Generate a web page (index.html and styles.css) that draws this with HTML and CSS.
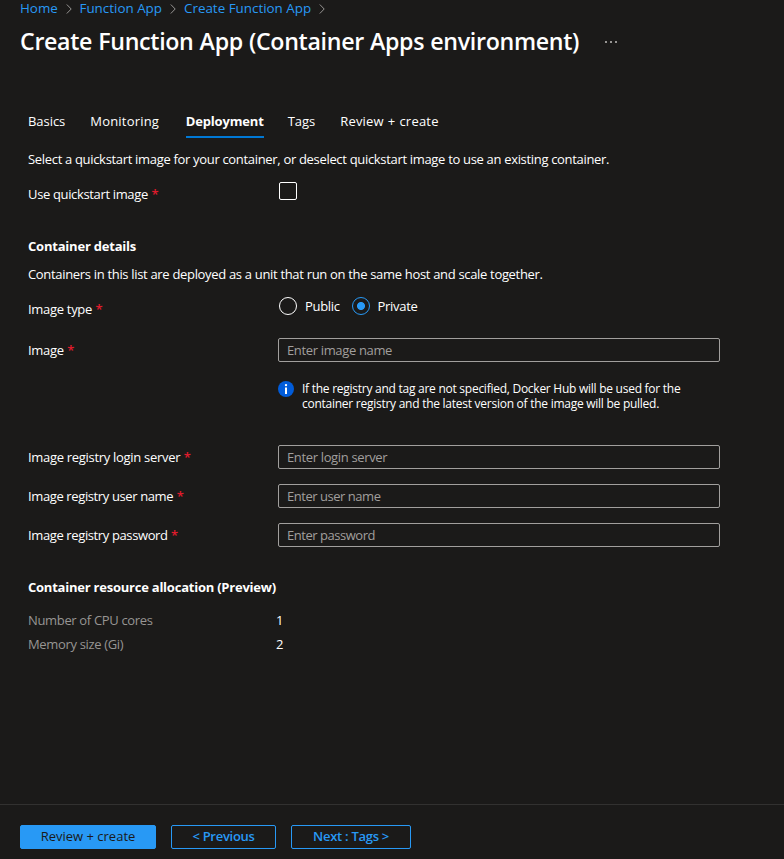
FILE: index.html
```html
<!DOCTYPE html>
<html lang="en">
<head>
<meta charset="utf-8">
<title>Create Function App</title>
<link rel="stylesheet" href="styles.css">
</head>
<body>
<div class="page">
  <nav class="breadcrumb">
    <a class="crumb-home">Home</a><svg class="chev" viewBox="0 0 6 10"><path d="M.8.5 5.2 5 .8 9.5"/></svg>
    <a>Function App</a><svg class="chev" viewBox="0 0 6 10"><path d="M.8.5 5.2 5 .8 9.5"/></svg>
    <a class="crumb-create">Create Function App</a><svg class="chev" viewBox="0 0 6 10"><path d="M.8.5 5.2 5 .8 9.5"/></svg>
  </nav>
  <header class="title-row">
    <h1>Create Function App (Container Apps environment)</h1>
    <svg class="more" viewBox="0 0 12 2"><path d="M0 0h2v2H0zM5 0h2v2H5zM10 0h2v2h-2z"/></svg>
  </header>
  <div class="tabs">
    <a class="tab">Basics</a>
    <a class="tab monitoring">Monitoring</a>
    <a class="tab active">Deployment</a>
    <a class="tab">Tags</a>
    <a class="tab review">Review + create</a>
  </div>
  <main class="content">
    <p class="intro">Select a quickstart image for your container, or deselect quickstart image to use an existing container.</p>
    <div class="row quickstart">
      <label>Use quickstart image <span class="req">*</span></label>
      <span class="checkbox"></span>
    </div>
    <h2>Container details</h2>
    <p class="details">Containers in this list are deployed as a unit that run on the same host and scale together.</p>
    <div class="row type">
      <label>Image type <span class="req">*</span></label>
      <div class="radios">
        <span class="radio"></span><span class="public">Public</span>
        <span class="radio selected"></span><span>Private</span>
      </div>
    </div>
    <div class="row">
      <label>Image <span class="req">*</span></label>
      <input type="text" placeholder="Enter image name">
    </div>
    <div class="info">
      <svg class="info-icon" viewBox="0 0 16 16"><circle cx="8" cy="8" r="8" fill="#015cda"/><circle cx="8" cy="4.1" r="1.2" fill="#fff"/><path d="M7 6.4h2V13H7z" fill="#fff"/></svg>
      <p>If the registry and tag are not specified, Docker Hub will be used for the<br>container registry and the latest version of the image will be pulled.</p>
    </div>
    <div class="registry">
      <div class="row">
        <label>Image registry login server <span class="req">*</span></label>
        <input type="text" placeholder="Enter login server">
      </div>
      <div class="row">
        <label class="user">Image registry user name <span class="req">*</span></label>
        <input class="tight" type="text" placeholder="Enter user name">
      </div>
      <div class="row">
        <label class="user">Image registry password <span class="req">*</span></label>
        <input class="tight" type="text" placeholder="Enter password">
      </div>
    </div>
    <h2 class="allocation">Container resource allocation (Preview)</h2>
    <dl>
      <dt>Number of CPU cores</dt><dd>1</dd>
      <dt>Memory size (Gi)</dt><dd>2</dd>
    </dl>
  </main>
  <footer>
    <button class="primary">Review + create</button>
    <button class="previous">&lt; Previous</button>
    <button class="next">Next : Tags &gt;</button>
  </footer>
</div>
</body>
</html>
```
FILE: styles.css
```css
* { box-sizing: border-box; }
body, h1, h2, p, dl, dd { margin: 0; }
body {
  background: #1b1a19;
  color: #fff;
  font: 13px/20px "Open Sans", "Noto Sans", sans-serif;
  letter-spacing: -.3px;
}
.page { height: 859px; display: flex; flex-direction: column; overflow: hidden; white-space: nowrap; }

.breadcrumb {
  display: flex; align-items: center; height: 18px; padding-left: 20px;
  color: #2899f5; font-size: 13.4px; line-height: 18px; letter-spacing: 0;
}
.breadcrumb a { flex: none; width: 82.5px; height: 20px; }
.breadcrumb .crumb-home { width: 37.5px; }
.breadcrumb .crumb-create { width: 126.5px; }
.chev { width: 6px; height: 10px; margin: 0 8px; fill: none; stroke: #979593; }

.title-row { display: flex; align-items: center; height: 48px; padding-left: 20px; }
h1 { width: 560px; height: 33px; font-size: 23.2px; line-height: 31px; font-weight: 600; letter-spacing: -.32px; word-spacing: .4px; }
.more { width: 12px; height: 2px; margin-left: 25px; fill: #979593; }

.tabs { display: flex; gap: 25px; height: 72px; padding: 44px 0 0 28px; letter-spacing: -.05px; }
.tab { flex: none; height: 28px; line-height: 22px; }
.tab.monitoring, .tab.review { letter-spacing: .2px; }
.tab.monitoring { width: 70.5px; }
.tab.active { width: 78px; font-weight: 700; letter-spacing: -.16px; border-bottom: 2px solid #0078d4; }
.tab.active + .tab { margin-left: -1px; }
.tab.review { word-spacing: .4px; }

.content { flex: 1; padding: 11px 64px 0 28px; }
.intro { letter-spacing: -.32px; }
.row { display: flex; align-items: center; height: 24px; }
label { width: 250px; flex: none; }
label.user { letter-spacing: -.38px; }
.req { color: #e01b2c; margin-left: .5px; font-weight: 600; }
.quickstart { margin-top: 10px; height: 23px; }
.quickstart label { padding-top: 7px; letter-spacing: -.35px; }
.checkbox { width: 18px; height: 18px; margin-left: 1px; border: 1px solid #fff; border-radius: 2px; }
h2 { margin-top: 30px; font-size: 13px; line-height: 20px; font-weight: 700; letter-spacing: -.21px; }
.quickstart + h2 { margin-top: 34px; }
.details { margin-top: 8px; letter-spacing: -.32px; }
.type { margin: 10px 0 20px; }
.type label { padding-top: 6px; }
.radios { display: flex; align-items: center; padding-left: 1px; }
.radio { width: 18px; height: 18px; margin-right: 8px; border: 1px solid #fff; border-radius: 50%; }
.public { width: 47px; }
.radio.selected { margin-right: 7.5px; border-color: #2899f5; background: radial-gradient(circle, #2899f5 3.6px, transparent 4.4px); }
input {
  width: 442px; height: 24px; padding: 0 8px; border: 1px solid #a19f9d; border-radius: 2px;
  background: #1b1a19; color: #fff; font: inherit; letter-spacing: -.35px;
}
input.tight { letter-spacing: -.47px; }
input::placeholder { color: #a19f9d; opacity: 1; }
.info { display: flex; margin: 19px 0 0 250px; gap: 8px; font-size: 12px; line-height: 15px; letter-spacing: -.26px; }
.info-icon { width: 16px; height: 16px; }
.registry { display: grid; gap: 15px; margin-top: 34px; }
h2.allocation { letter-spacing: -.23px; }
dl { display: grid; grid-template-columns: 248px 1fr; row-gap: 4px; margin-top: 13px; }
dt { color: #979593; letter-spacing: -.34px; }

footer { display: flex; flex: none; gap: 15px; height: 55px; padding: 20px 0 0 20px; border-top: 1px solid #323130; }
button {
  height: 24px; padding: 0 0 2px; border: 1px solid #2899f5; border-radius: 2px; background: transparent;
  color: #2899f5; font: 600 13px/20px "Open Sans", "Noto Sans", sans-serif; letter-spacing: -.28px;
}
.primary { width: 136px; background: #2899f5; color: #1b1a19; font-weight: 400; letter-spacing: 0; }
.previous { width: 105px; }
.next { width: 120px; }
```
